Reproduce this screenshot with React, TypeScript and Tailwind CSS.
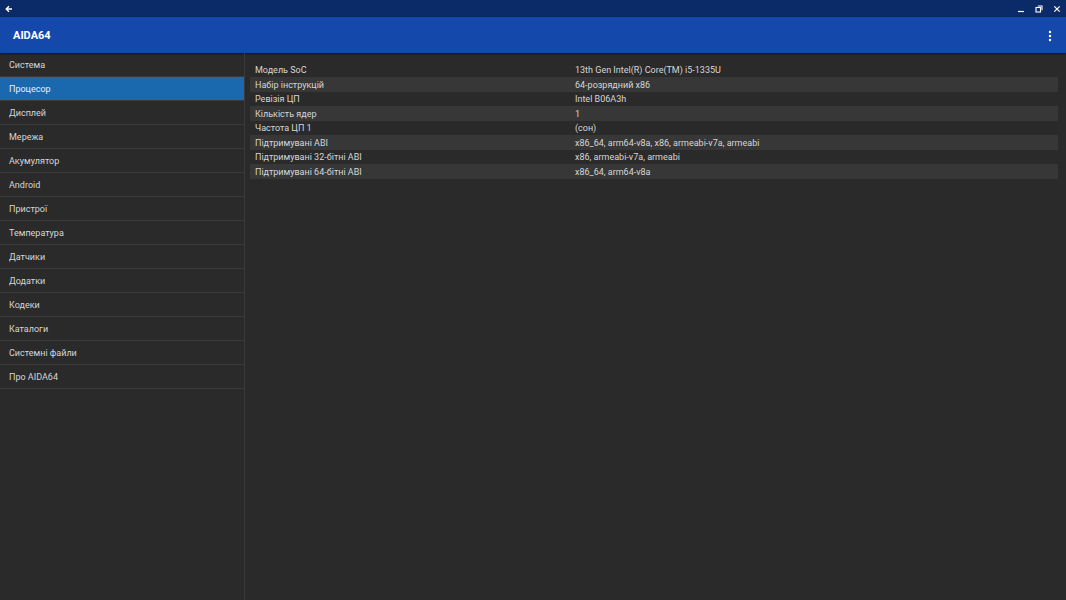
import React from "react";

const menuItems = [
  "Система",
  "Процесор",
  "Дисплей",
  "Мережа",
  "Акумулятор",
  "Android",
  "Пристрої",
  "Температура",
  "Датчики",
  "Додатки",
  "Кодеки",
  "Каталоги",
  "Системні файли",
  "Про AIDA64",
];

const rows: [string, string][] = [
  ["Модель SoC", "13th Gen Intel(R) Core(TM) i5-1335U"],
  ["Набір інструкцій", "64-розрядний x86"],
  ["Ревізія ЦП", "Intel B06A3h"],
  ["Кількість ядер", "1"],
  ["Частота ЦП 1", "(сон)"],
  ["Підтримувані ABI", "x86_64, arm64-v8a, x86, armeabi-v7a, armeabi"],
  ["Підтримувані 32-бітні ABI", "x86, armeabi-v7a, armeabi"],
  ["Підтримувані 64-бітні ABI", "x86_64, arm64-v8a"],
];

const TitleBar = () => (
  <div className="flex h-[17px] items-center justify-between bg-[#0b2b68] pl-[5px] pr-[5px]">
    <svg width="8" height="8" viewBox="0 0 8 8" className="text-white">
      <path d="M7 4H1.5M4 1.2 1.2 4 4 6.8" stroke="currentColor" strokeWidth="1.4" fill="none" />
    </svg>
    <div className="flex items-center gap-[10px] text-white">
      <svg width="8" height="8" viewBox="0 0 8 8">
        <path d="M1 6.5h6" stroke="currentColor" strokeWidth="1.2" />
      </svg>
      <svg width="8" height="8" viewBox="0 0 8 8">
        <rect x="1" y="2.5" width="4.5" height="4.5" fill="none" stroke="currentColor" strokeWidth="1.1" />
        <path d="M2.8 1h4.2v4.2" fill="none" stroke="currentColor" strokeWidth="1.1" />
      </svg>
      <svg width="8" height="8" viewBox="0 0 8 8">
        <path d="M1.3 1.3l5.4 5.4M6.7 1.3 1.3 6.7" stroke="currentColor" strokeWidth="1.2" />
      </svg>
    </div>
  </div>
);

const AppBar = () => (
  <div className="flex h-[36px] items-center justify-between bg-[#1449ab] pl-[13px] pr-[14px] pt-[2px] shadow-[0_1px_2px_rgba(0,0,0,0.5)]">
    <span className="text-[11px] font-bold text-white">AIDA64</span>
    <svg width="4" height="12" viewBox="0 0 4 12" className="text-white">
      <circle cx="2" cy="2" r="1.2" fill="currentColor" />
      <circle cx="2" cy="6" r="1.2" fill="currentColor" />
      <circle cx="2" cy="10" r="1.2" fill="currentColor" />
    </svg>
  </div>
);

export default function App() {
  return (
    <div className="flex h-[600px] w-[1066px] flex-col overflow-hidden bg-[#2a2a2a] font-['Roboto',sans-serif]">
      <TitleBar />
      <AppBar />
      <div className="flex flex-1">
        <div className="w-[245px] border-r border-[#3a3a3a]">
          {menuItems.map((item) => (
            <div
              key={item}
              className={`flex h-[24px] items-center border-b border-[#3b3b3b] pl-[9px] pt-[3px] text-[9px] ${
                item === "Процесор" ? "bg-[#1a68ad] text-[#e8f0fa]" : "text-[#d6d6d6]"
              }`}
            >
              {item}
            </div>
          ))}
        </div>
        <div className="flex-1 pl-[5px] pr-[8px] pt-[10px]">
          {rows.map(([label, value], i) => (
            <div
              key={label}
              className={`flex h-[14.45px] items-center px-[5px] pt-[2px] text-[9px] text-[#d6d6d6] ${
                i % 2 === 1 ? "bg-[#373737]" : ""
              }`}
            >
              <span className="w-[320px]">{label}</span>
              <span>{value}</span>
            </div>
          ))}
        </div>
      </div>
    </div>
  );
}
